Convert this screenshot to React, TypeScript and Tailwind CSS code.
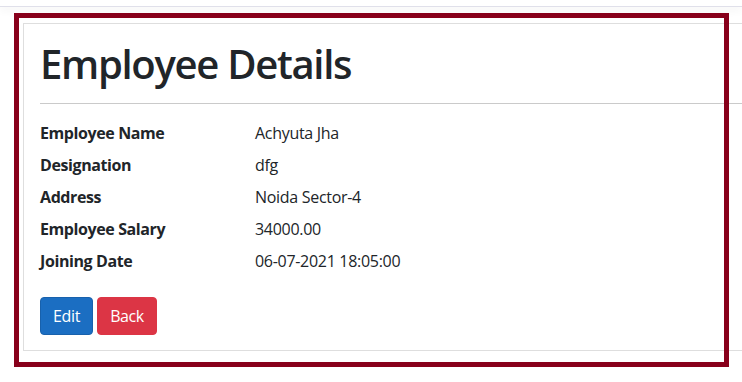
import React from "react";

const rows: [string, string][] = [
  ["Employee Name", "Achyuta Jha"],
  ["Designation", "dfg"],
  ["Address", "Noida Sector-4"],
  ["Employee Salary", "34000.00"],
  ["Joining Date", "06-07-2021 18:05:00"],
];

export default function App() {
  return (
    <div
      className="relative w-[742px] h-[382px] overflow-hidden bg-white text-[#212529]"
      style={{ fontFamily: '"Open Sans", "Noto Sans", sans-serif' }}
    >
      <div className="h-[7px] border-b border-[#e0e0ea] bg-white shadow-[0_4px_8px_rgba(0,0,0,0.04)]" />
      <div className="pl-[23px] pt-[16px]">
        <div className="w-[760px] border border-[#dedede] px-[16px] pt-[16px] pb-[15px]">
          <h1 className="text-[40px] leading-[48px] font-semibold tracking-[-1.3px] m-0">
            Employee Details
          </h1>
          <hr className="mt-[15px] mb-[17px] border-0 border-t border-[#cacaca]" />
          <dl className="flex flex-col gap-[8px]">
            {rows.map(([k, v]) => (
              <div key={k} className="flex text-[16px] leading-[24px]">
                <dt className="w-[215px] font-bold tracking-[-0.4px]">{k}</dt>
                <dd className="tracking-[-0.3px]">{v}</dd>
              </div>
            ))}
          </dl>
          <div className="flex gap-[4px] mt-[24px]">
            <button className="h-[38px] px-[12px] rounded-[4px] border border-[#1861ac] bg-[#1b6ec2] text-white text-[16px] leading-[24px] tracking-[-0.3px]">
              Edit
            </button>
            <button className="h-[38px] px-[12px] rounded-[4px] border border-[#dc3545] bg-[#dc3545] text-white text-[16px] leading-[24px] tracking-[-0.5px]">
              Back
            </button>
          </div>
        </div>
      </div>
      <div className="pointer-events-none absolute left-[14px] top-[13px] w-[715px] h-[354px] border-[5px] border-[#88001b]" />
    </div>
  );
}
